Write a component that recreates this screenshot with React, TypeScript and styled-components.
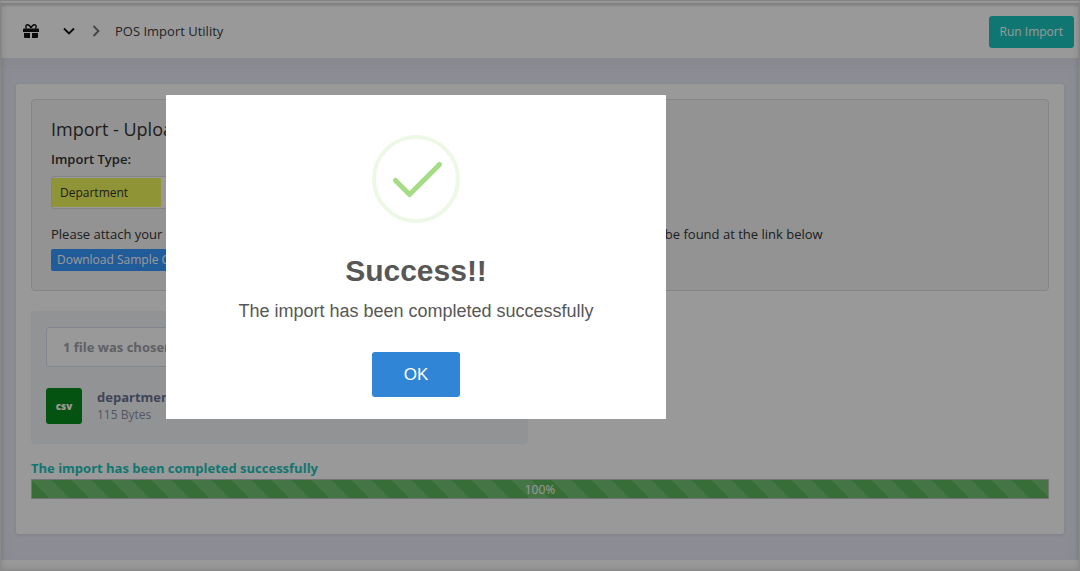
import React from "react";
import styled, { createGlobalStyle } from "styled-components";

const GlobalStyle = createGlobalStyle`
  * { box-sizing: border-box; }
  html, body, #root { min-height: 100%; }
  body {
    margin: 0;
    font: 13px/20px "Open Sans", sans-serif;
    color: #333;
    background: #fff;
    overflow-x: hidden;
  }
  h1, h2, p { margin: 0; }
  button, select, input { font: inherit; }
`;

const Page = styled.div`
  display: flex;
  flex-direction: column;
  min-height: 100vh;
  border: 1px solid #e4e4e4;
  box-shadow: inset 0 0 6px 1px rgba(0, 0, 0, 0.12);
`;

const Header = styled.header`
  display: flex;
  align-items: center;
  justify-content: space-between;
  height: 57px;
  padding: 2px 5px 0 21px;
  border-top: 2px solid #fafafa;
  box-shadow: 0 2px 16px rgba(69, 65, 78, 0.12), inset 0 3px 2px rgba(0, 0, 0, 0.12);
`;

const Crumbs = styled.nav`
  display: flex;
  align-items: center;
  padding-bottom: 2px;
`;

const IconButton = styled.button`
  display: flex;
  padding: 0;
  border: 0;
  background: none;
  color: #111;
`;

const MenuToggle = styled(IconButton)`
  margin: 0 17px 0 23px;
`;

const Crumb = styled.a`
  margin-left: 15px;
  color: #3c3c3f;
  text-decoration: none;
`;

const RunButton = styled.button`
  height: 32px;
  padding: 0 11px;
  border: 0;
  border-radius: 3px;
  background: #1bc5bd;
  color: #fff;
  font-size: 12px;
`;

const Main = styled.main`
  flex: 1;
  padding: 26px 15px 25px;
  background: #eaecf7;
  box-shadow: inset 0 6px 16px rgba(69, 65, 78, 0.06), inset 6px 0 5px -5px rgba(0, 0, 0, 0.1),
    inset -6px 0 5px -5px rgba(0, 0, 0, 0.1);
`;

const Card = styled.section`
  padding: 15px 15px 35px;
  border-radius: 3px;
  background: #fff;
  box-shadow: 0 1px 3px 1px rgba(69, 65, 78, 0.08);
`;

const Well = styled.section`
  padding: 17px 19px;
  height: 192px;
  border: 1px solid #e0e0e0;
  border-radius: 4px;
  background: #f5f5f5;
`;

const Heading = styled.h1`
  font-size: 18px;
  line-height: 24px;
  font-weight: 400;
`;

const FieldLabel = styled.label`
  display: block;
  margin: 8px 0 7px;
  font-weight: 600;
`;

const TypeSelect = styled.select`
  display: block;
  width: 240px;
  height: 33px;
  padding: 0 8px;
  border: 1px solid #ddd;
  border-radius: 3px;
  appearance: none;
  color: #333;
  font-size: 12px;
  background: linear-gradient(#eef75a, #eef75a) 0 1px / 109px 29px no-repeat #fff;
`;

const Note = styled.p`
  margin: 15px 0 5px;
  white-space: nowrap;
`;

const SampleLink = styled.a`
  display: inline-block;
  height: 22px;
  padding: 0 6px;
  border-radius: 2px;
  background: #3699ff;
  color: #fff;
  font-size: 12px;
  font-weight: 500;
  line-height: 22px;
  text-decoration: none;
`;

const Uploader = styled.section`
  width: 497px;
  max-width: 100%;
  margin: 20px 0 14px;
  padding: 16px 15px 20px;
  border-radius: 4px;
  background: #f3f6f9;
`;

const FileField = styled.input`
  display: block;
  width: 100%;
  height: 40px;
  padding: 0 16px;
  border: 1px solid #d6deef;
  border-radius: 3px;
  background: #fff;
  color: #a0a0a8;
  font-weight: 700;
`;

const FileRow = styled.div`
  display: flex;
  align-items: center;
  gap: 15px;
  margin-top: 21px;
`;

const FileBadge = styled.span`
  width: 36px;
  height: 36px;
  border-radius: 3px;
  background: #088a1c;
  color: #fff;
  font-size: 10px;
  font-weight: 800;
  line-height: 36px;
  text-align: center;
`;

const FileInfo = styled.div`
  color: #8b8fa5;
  font-size: 12px;
  line-height: 18px;
`;

const FileName = styled.strong`
  display: block;
  color: #6b7391;
  font-size: 13px;
`;

const Status = styled.p`
  margin-bottom: 1px;
  color: #1bc5bd;
  font-weight: 700;
`;

const Progress = styled.div`
  height: 20px;
  border: 1px solid #c0c0c0;
`;

const ProgressFill = styled.div`
  height: 100%;
  color: #fff;
  font-size: 12px;
  line-height: 20px;
  text-align: center;
  background-color: #5cb85c;
  background-image: linear-gradient(
    45deg,
    rgba(255, 255, 255, 0.15) 25%,
    transparent 25%,
    transparent 50%,
    rgba(255, 255, 255, 0.15) 50%,
    rgba(255, 255, 255, 0.15) 75%,
    transparent 75%,
    transparent
  );
  background-size: 40px 40px;
`;

const Footer = styled.footer`
  height: 10px;
`;

const Overlay = styled.div`
  position: fixed;
  inset: 0;
  padding: 95px 0 0 166px;
  background: rgba(0, 0, 0, 0.4);
`;

const Dialog = styled.section`
  display: flex;
  flex-direction: column;
  align-items: center;
  width: 500px;
  max-width: 100%;
  padding: 40px 20px 22px;
  background: #fff;
  color: #575757;
  font-family: "Liberation Sans", Arial, sans-serif;
`;

const DialogTitle = styled.h2`
  margin-top: 28px;
  font-size: 30px;
  line-height: 40px;
`;

const DialogText = styled.p`
  margin-top: 8px;
  font-size: 18px;
  line-height: 24px;
`;

const OkButton = styled.button`
  width: 88px;
  height: 45px;
  margin-top: 29px;
  border: 0;
  border-radius: 3px;
  background: #3085d6;
  color: #fff;
  font-size: 17px;
`;

const GiftIcon = () => (
  <svg width="18" height="16" viewBox="0 0 18 16" fill="currentColor" aria-hidden="true">
    <path d="M2 5.500h14a1 1 0 0 1 1 1V9H1V6.500a1 1 0 0 1 1-1zM2 10h6v5H3a1 1 0 0 1-1-1zM10 10h6v4a1 1 0 0 1-1 1h-5z" />
    <path
      d="M9 5C8 2.500 6.800 1.700 5.500 1.700C3.800 1.700 3.300 3.800 4.500 5.500M9 5C10 2.500 11.200 1.700 12.500 1.700C14.200 1.700 14.700 3.800 13.500 5.500"
      fill="none"
      stroke="currentColor"
      strokeWidth="1.400"
    />
  </svg>
);

const ChevronDown = () => (
  <svg width="12" height="8" viewBox="0 0 12 8" fill="none" stroke="currentColor" strokeWidth="1.800" aria-hidden="true">
    <path d="M1 1.500l5 5 5-5" />
  </svg>
);

const ChevronRight = () => (
  <svg width="8" height="12" viewBox="0 0 8 12" fill="none" stroke="#707078" strokeWidth="1.800" aria-hidden="true">
    <path d="M1.500 1l5 5-5 5" />
  </svg>
);

const SuccessIcon = () => (
  <svg width="88" height="88" viewBox="0 0 88 88" fill="none" aria-hidden="true">
    <circle cx="44" cy="44" r="42" stroke="#edf8e7" strokeWidth="4" />
    <path d="M23.500 45.500L37.500 59.500L67.500 29.500" stroke="#a5dc86" strokeWidth="5" strokeLinecap="round" strokeLinejoin="round" />
  </svg>
);

export default function App() {
  return (
    <>
      <GlobalStyle />
      <Page>
        <Header>
          <Crumbs aria-label="Breadcrumb">
            <IconButton aria-label="Home"><GiftIcon /></IconButton>
            <MenuToggle aria-label="Open menu"><ChevronDown /></MenuToggle>
            <ChevronRight />
            <Crumb href="#import">POS Import Utility</Crumb>
          </Crumbs>
          <RunButton>Run Import</RunButton>
        </Header>
        <Main>
          <Card>
            <Well>
              <Heading>Import - Upload File</Heading>
              <FieldLabel htmlFor="import-type">Import Type:</FieldLabel>
              <TypeSelect id="import-type" defaultValue="Department">
                <option>Department</option>
              </TypeSelect>
              <Note>
                Please attach your import file in the CSV format only. Sample of the file for the selected data type can be found at the link below
              </Note>
              <SampleLink href="#sample">Download Sample CSV</SampleLink>
            </Well>
            <Uploader>
              <FileField aria-label="Chosen file" readOnly value="1 file was chosen" />
              <FileRow>
                <FileBadge>csv</FileBadge>
                <FileInfo>
                  <FileName>department.csv</FileName>
                  115 Bytes
                </FileInfo>
              </FileRow>
            </Uploader>
            <Status>The import has been completed successfully</Status>
            <Progress role="progressbar" aria-label="Import progress" aria-valuenow={100}>
              <ProgressFill>100%</ProgressFill>
            </Progress>
          </Card>
        </Main>
        <Footer />
      </Page>
      <Overlay>
        <Dialog role="dialog" aria-modal="true" aria-labelledby="dialog-title">
          <SuccessIcon />
          <DialogTitle id="dialog-title">Success!!</DialogTitle>
          <DialogText>The import has been completed successfully</DialogText>
          <OkButton>OK</OkButton>
        </Dialog>
      </Overlay>
    </>
  );
}
